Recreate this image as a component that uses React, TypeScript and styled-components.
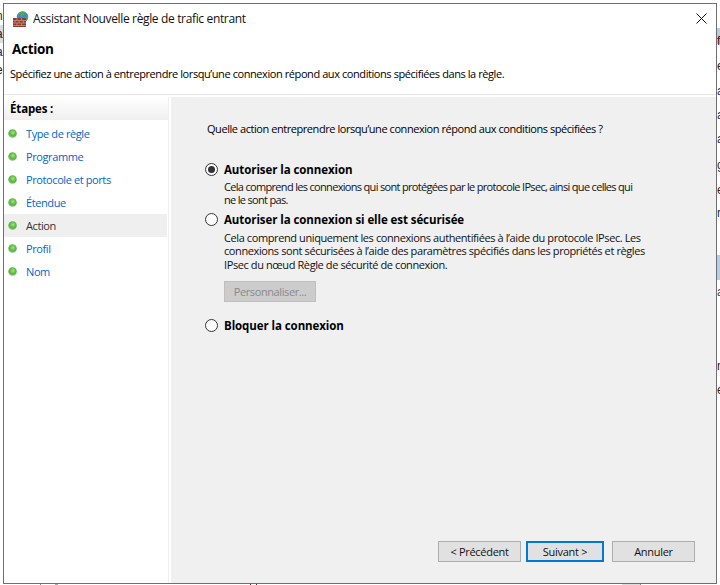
import React from 'react';
import styled, { createGlobalStyle } from 'styled-components';

const GlobalStyle = createGlobalStyle`
  html, body {
    margin: 0;
    padding: 0;
    background: #ffffff;
  }
  * {
    box-sizing: border-box;
  }
`;

const Desktop = styled.div`
  width: 720px;
  height: 585px;
  background: #ffffff;
  overflow: hidden;
  display: grid;
  grid-template-columns: 3px 714px 3px;
  grid-template-rows: 3px 581px 1px;
  font-family: "Open Sans", "Noto Sans", sans-serif;
  font-size: 11px;
  letter-spacing: -0.4px;
  color: #000;
`;

const EdgeStrip = styled.div`
  grid-row: 1 / 4;
  overflow: hidden;
  display: flex;
  flex-direction: column;
  font-family: "Liberation Sans", sans-serif;
  font-size: 12px;
`;

const EdgeRow = styled.div<{ $h: number; $lh?: number; $bg?: string; $c?: string; $mirror?: boolean }>`
  height: ${({ $h }) => $h}px;
  flex: none;
  line-height: ${({ $h, $lh }) => $lh ?? $h}px;
  background: ${({ $bg }) => $bg ?? 'transparent'};
  color: ${({ $c }) => $c ?? '#222'};
  white-space: nowrap;
  text-indent: ${({ $mirror }) => ($mirror ? '-4px' : '0')};
`;

const BottomStrip = styled.div`
  grid-column: 2;
  grid-row: 3;
  display: flex;
  align-items: stretch;
`;

const BottomMark = styled.span<{ $ml: number; $w: number; $c: string }>`
  margin-left: ${({ $ml }) => $ml}px;
  width: ${({ $w }) => $w}px;
  background: ${({ $c }) => $c};
`;

const Window = styled.div`
  grid-column: 2;
  grid-row: 2;
  border: 1px solid #6f6f6f;
  background: #ffffff;
  display: flex;
  flex-direction: column;
  min-height: 0;
`;

const TitleBar = styled.div`
  height: 29px;
  display: flex;
  align-items: center;
  padding: 0 0 0 9px;
  flex: none;
`;

const TitleText = styled.div`
  margin-left: 4px;
  font-size: 12px;
  letter-spacing: -0.35px;
  color: #111;
  flex: 1;
`;

const CloseButton = styled.button`
  width: 30px;
  height: 29px;
  border: 0;
  padding: 0;
  background: transparent;
  display: flex;
  align-items: center;
  justify-content: center;
`;

const Header = styled.div`
  height: 62px;
  padding: 0 0 0 6px;
  flex: none;
  border-bottom: 1px solid #e6e6e6;
`;

const HeaderTitle = styled.h1`
  margin: 0 0 0 2px;
  height: 32px;
  line-height: 32px;
  font-size: 13.5px;
  letter-spacing: -0.3px;
  font-weight: 700;
  color: #000;
`;

const HeaderText = styled.div`
  line-height: 16px;
  margin-top: 1px;
  letter-spacing: -0.42px;
`;

const Body = styled.div`
  flex: 1;
  margin-top: 2px;
  display: flex;
  min-height: 0;
`;

const Sidebar = styled.aside`
  width: 165px;
  flex: none;
  border-right: 1px solid #eeeeee;
  margin-right: 2px;
`;

const SidebarTitle = styled.div`
  height: 23px;
  line-height: 24px;
  padding-left: 6px;
  font-weight: 700;
  font-size: 11.5px;
  letter-spacing: -0.15px;
  color: #000;
  background: linear-gradient(to bottom, #ffffff, #efefef);
`;

const Steps = styled.ul`
  list-style: none;
  margin: 2px 0 0;
  padding: 0;
`;

const Step = styled.li<{ $active?: boolean }>`
  height: 23px;
  display: flex;
  align-items: center;
  padding-left: 4px;
  margin-right: 1px;
  color: ${({ $active }) => ($active ? '#333' : '#0066cc')};
  background: ${({ $active }) => ($active ? '#efefef' : 'transparent')};
`;

const StepLabel = styled.span`
  margin-left: 9px;
`;

const Main = styled.main`
  flex: 1;
  background: #f0f0f0;
  display: flex;
  flex-direction: column;
  padding: 24px 21px 21px 32px;
`;

const Question = styled.div`
  line-height: 16px;
  margin-left: 4px;
  letter-spacing: -0.44px;
`;

const Options = styled.div`
  margin-top: 24px;
  flex: 1;
  display: flex;
  flex-direction: column;
`;

const OptionRow = styled.div<{ $gap?: number }>`
  display: flex;
  align-items: center;
  height: 16px;
  margin-top: ${({ $gap }) => $gap ?? 0}px;
`;

const RadioMark = styled.span<{ $checked?: boolean }>`
  width: 13px;
  height: 13px;
  margin-left: 2px;
  border-radius: 50%;
  border: 1px solid #333;
  background: #fff;
  flex: none;
  display: flex;
  align-items: center;
  justify-content: center;

  &::after {
    content: '';
    display: ${({ $checked }) => ($checked ? 'block' : 'none')};
    width: 7px;
    height: 7px;
    border-radius: 50%;
    background: #333;
  }
`;

const OptionLabel = styled.label`
  margin-left: 6px;
  font-weight: 700;
  font-size: 11.5px;
  letter-spacing: -0.08px;
  color: #000;
`;

const Description = styled.div<{ $spacing?: number; $w?: number }>`
  margin: 3px 0 0 21px;
  width: ${({ $w }) => $w ?? 428}px;
  line-height: 13.4px;
  letter-spacing: ${({ $spacing }) => $spacing ?? -0.4}px;
  color: #111;
`;

const DisabledButton = styled.button`
  width: 92px;
  height: 21px;
  margin: 10px 0 0 21px;
  border: 1px solid #bfbfbf;
  background: #cccccc;
  color: #8a8a8a;
  font: inherit;
  letter-spacing: inherit;
  padding: 0;
`;

const Footer = styled.div`
  display: flex;
  justify-content: flex-end;
  gap: 5px;
`;

const WizardButton = styled.button<{ $primary?: boolean; $w: number; $ml?: number }>`
  width: ${({ $w }) => $w}px;
  height: 21px;
  margin-left: ${({ $ml }) => $ml ?? 0}px;
  padding: 0;
  background: #e1e1e1;
  border: ${({ $primary }) => ($primary ? '2px solid #0078d7' : '1px solid #adadad')};
  font: inherit;
  letter-spacing: -0.3px;
  color: #111;
`;

const Bullet = () => (
  <svg width="9" height="9" viewBox="0 0 10 10" style={{ flex: 'none' }}>
    <defs>
      <radialGradient id="bullet" cx="0.55" cy="0.4" r="0.6">
        <stop offset="0" stopColor="#a6e878" />
        <stop offset="0.6" stopColor="#56b83c" />
        <stop offset="1" stopColor="#8fb98a" />
      </radialGradient>
    </defs>
    <circle cx="5" cy="5" r="4.8" fill="url(#bullet)" />
  </svg>
);

const FirewallIcon = () => (
  <svg width="16" height="16" viewBox="0 0 16 16" style={{ flex: 'none' }}>
    <circle cx="9.5" cy="6" r="5.8" fill="#3a8fc9" />
    <path d="M6 2 Q9 -0.5 12 1 L11 4 L8 5 Z" fill="#58a84a" />
    <path d="M11 7 L15 5 L15 8 L12 9 Z" fill="#58a84a" />
    <rect x="0" y="7" width="13" height="9" fill="#8f3d2c" />
    <path d="M0 9.5 H13 M0 12 H13 M0 14.5 H13 M4 7 V9.5 M8.5 7 V9.5 M2 9.5 V12 M6 9.5 V12 M10.5 9.5 V12 M4 12 V14.5 M8.5 12 V14.5" stroke="#c98f7c" strokeWidth="0.8" fill="none" />
  </svg>
);

const CloseIcon = () => (
  <svg width="11" height="11" viewBox="0 0 11 11">
    <path d="M0.5 0.5 L10.5 10.5 M10.5 0.5 L0.5 10.5" stroke="#111" strokeWidth="1" fill="none" />
  </svg>
);

const steps = ['Type de règle', 'Programme', 'Protocole et ports', 'Étendue', 'Action', 'Profil', 'Nom'];

// what shows of the window behind, on both sides
const leftEdge = [
  { h: 8 },
  { h: 17, text: 'n', c: '#3a2a10' },
  { h: 18, text: 'a', bg: '#dcdcdc', c: '#222' },
  { h: 18, text: 'a', c: '#102a6a' },
  { h: 18, text: 'e', c: '#123' },
];

const rightEdge = [
  { h: 28 },
  { h: 16, lh: 27, text: 'f', bg: '#b5cde6', c: '#4a1020' },
  { h: 14 },
  { h: 16, text: 'e', c: '#222' },
  { h: 9 },
  { h: 16, text: 'a', c: '#102a6a' },
  { h: 8 },
  { h: 16, text: 'a', c: '#102a6a' },
  { h: 8 },
  { h: 16, text: 'a', c: '#102a6a' },
  { h: 10 },
  { h: 16, text: 'g', c: '#333' },
  { h: 9 },
  { h: 16, text: 'e', c: '#4a2010' },
  { h: 7 },
  { h: 16, text: 'r', c: '#234' },
  { h: 34 },
  { h: 25, bg: '#b5cde6' },
  { h: 4 },
  { h: 16, text: 'a', c: '#345' },
  { h: 58 },
  { h: 16, text: 'n', c: '#412' },
  { h: 8 },
  { h: 16, text: 'é', c: '#321' },
];

export default function App() {
  return (
    <>
      <GlobalStyle />
      <Desktop>
        <EdgeStrip>
          {leftEdge.map((r, i) => (
            <EdgeRow key={i} $h={r.h} $bg={r.bg} $c={r.c} $mirror>{r.text}</EdgeRow>
          ))}
        </EdgeStrip>
        <Window>
          <TitleBar>
            <FirewallIcon />
            <TitleText>Assistant Nouvelle règle de trafic entrant</TitleText>
            <CloseButton aria-label="Fermer">
              <CloseIcon />
            </CloseButton>
          </TitleBar>
          <Header>
            <HeaderTitle>Action</HeaderTitle>
            <HeaderText>
              Spécifiez une action à entreprendre lorsqu’une connexion répond aux conditions spécifiées dans la règle.
            </HeaderText>
          </Header>
          <Body>
            <Sidebar>
              <SidebarTitle>Étapes :</SidebarTitle>
              <Steps>
                {steps.map((s) => (
                  <Step key={s} $active={s === 'Action'}>
                    <Bullet />
                    <StepLabel>{s}</StepLabel>
                  </Step>
                ))}
              </Steps>
            </Sidebar>
            <Main>
              <Question>Quelle action entreprendre lorsqu’une connexion répond aux conditions spécifiées ?</Question>
              <Options>
                <OptionRow>
                  <RadioMark $checked />
                  <OptionLabel>Autoriser la connexion</OptionLabel>
                </OptionRow>
                <Description $spacing={-0.68} $w={414}>
                  Cela comprend les connexions qui sont protégées par le protocole IPsec, ainsi que celles qui ne le sont pas.
                </Description>
                <OptionRow $gap={5}>
                  <RadioMark />
                  <OptionLabel>Autoriser la connexion si elle est sécurisée</OptionLabel>
                </OptionRow>
                <Description>
                  Cela comprend uniquement les connexions authentifiées à l’aide du protocole IPsec. Les connexions sont sécurisées à l’aide des paramètres spécifiés dans les propriétés et règles IPsec du nœud Règle de sécurité de connexion.
                </Description>
                <DisabledButton disabled>Personnaliser...</DisabledButton>
                <OptionRow $gap={15}>
                  <RadioMark />
                  <OptionLabel>Bloquer la connexion</OptionLabel>
                </OptionRow>
              </Options>
              <Footer>
                <WizardButton $w={83}>&lt; Précédent</WizardButton>
                <WizardButton $w={78} $primary>Suivant &gt;</WizardButton>
                <WizardButton $w={83} $ml={3}>Annuler</WizardButton>
              </Footer>
            </Main>
          </Body>
        </Window>
        <EdgeStrip>
          {rightEdge.map((r, i) => (
            <EdgeRow key={i} $h={r.h} $lh={r.lh} $bg={r.bg} $c={r.c}>{r.text}</EdgeRow>
          ))}
        </EdgeStrip>
        <BottomStrip>
          <BottomMark $ml={37} $w={1} $c="#888" />
          <BottomMark $ml={14} $w={3} $c="#aaa" />
          <BottomMark $ml={192} $w={1} $c="#622" />
          <BottomMark $ml={5} $w={1} $c="#622" />
          <BottomMark $ml={365} $w={18} $c="#ddd" />
          <BottomMark $ml={0} $w={1} $c="#888" />
        </BottomStrip>
      </Desktop>
    </>
  );
}
